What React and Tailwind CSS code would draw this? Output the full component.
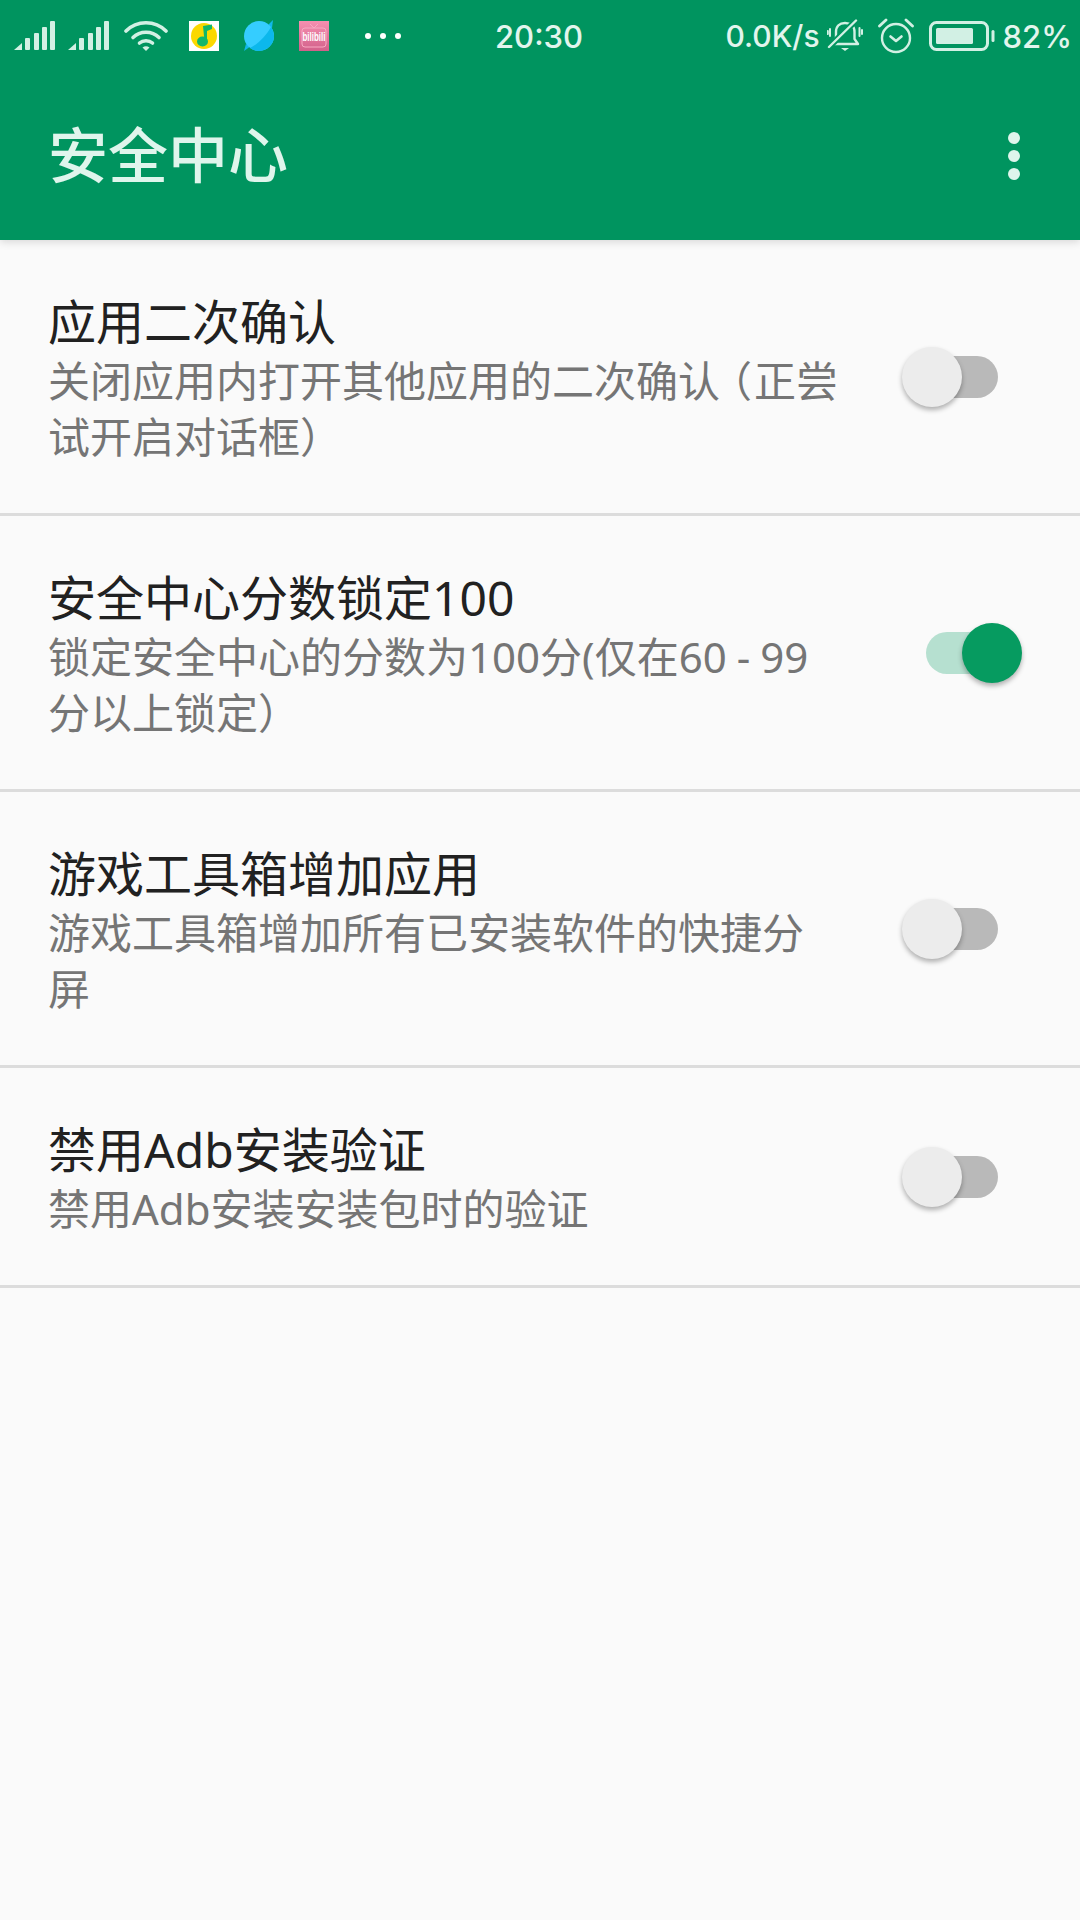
const ICON = '#d2f0e4';

function Signal({ className }) {
  return (
    <svg className={className} width="41" height="30" viewBox="0 0 41 30" fill={ICON}>
      <path d="M0 29 L8 22 V29 Z" />
      <rect x="11" y="17" width="5" height="12" rx="1" />
      <rect x="20" y="12" width="5" height="17" rx="1" />
      <rect x="28" y="6" width="5" height="23" rx="1" />
      <rect x="36" y="0" width="5" height="29" rx="1" />
    </svg>
  );
}

function Wifi() {
  return (
    <svg className="ml-[15px]" width="44" height="32" viewBox="0 0 44 32" fill="none" stroke={ICON} strokeWidth="3.6" strokeLinecap="round">
      <path d="M2 11 C13 0 31 0 42 11" />
      <path d="M9 17.5 C16 10.5 28 10.5 35 17.5" />
      <path d="M15.5 23 C19 20 25 20 28.5 23" />
      <path d="M22 31 L18.5 27.5 Q22 25 25.5 27.5 Z" fill={ICON} stroke="none" />
    </svg>
  );
}

function QQMusic() {
  return (
    <svg className="ml-[21px]" width="30" height="30" viewBox="0 0 30 30">
      <rect width="30" height="30" fill="#ffffff" />
      <circle cx="15" cy="15" r="13" fill="#fbd800" />
      <path d="M14 5 L15.5 20 L18 20 L18 10 L23 8 L23 3.5 Z" fill="#12b76a" />
      <ellipse cx="13.5" cy="20.5" rx="5.5" ry="5" fill="#12b76a" />
    </svg>
  );
}

function Planet() {
  return (
    <svg className="ml-[24px]" width="32" height="32" viewBox="0 0 32 32">
      <path d="M24 6 L30 0 L29 8 Z" fill="#10b8ea" />
      <path d="M8 26 L1 31 L3 24 Z" fill="#10b8ea" />
      <circle cx="16" cy="16" r="15" fill="#35cdff" />
      <path d="M28 7 A15 15 0 0 1 7 28 C15 24 23 16 28 7 Z" fill="#0cb8ec" />
    </svg>
  );
}

function Bili() {
  return (
    <svg className="ml-[24px]" width="30" height="30" viewBox="0 0 30 30">
      <defs>
        <linearGradient id="biliGradient" x1="0" y1="0" x2="0" y2="1">
          <stop offset="0" stopColor="#f590b0" />
          <stop offset="1" stopColor="#d2608a" />
        </linearGradient>
      </defs>
      <rect width="30" height="30" fill="url(#biliGradient)" />
      <path d="M11 3 L15 7 L19 3" fill="none" stroke="#f7a9c2" strokeWidth="1" />
      <rect x="3" y="7" width="24" height="19" rx="3" fill="none" stroke="#f7a9c2" strokeWidth="1" />
      <text x="3.5" y="20" fontSize="12" fontWeight="700" fill="#ffffff" textLength="23" lengthAdjust="spacingAndGlyphs" fontFamily="Liberation Sans, sans-serif">bilibili</text>
    </svg>
  );
}

function Dots() {
  return (
    <div className="ml-[36px] flex gap-[9px]">
      <div className="w-[6px] h-[6px] rounded-full bg-white" />
      <div className="w-[6px] h-[6px] rounded-full bg-white" />
      <div className="w-[6px] h-[6px] rounded-full bg-white" />
    </div>
  );
}

function Bell() {
  return (
    <svg className="ml-[7px]" width="36" height="34" viewBox="0 0 36 34" fill="none" stroke={ICON} strokeWidth="2.4" strokeLinecap="round" strokeLinejoin="round">
      <path d="M5 25 H31 L27.5 20 V13 C27.5 7 23.5 4 18 4 C12.5 4 9 7 9 13 V20 Z" />
      <path d="M2 28 L29 1.5" stroke="#00945f" strokeWidth="6" />
      <path d="M2 28 L29 1.5" />
      <path d="M14 29 H22 L18 32 Z" fill={ICON} stroke="none" />
      <path d="M3 10 V17 M0.8 12 V15 M32.5 9 V17 M35 11 V15" strokeWidth="2" />
    </svg>
  );
}

function Alarm() {
  return (
    <svg className="ml-[15px]" width="36" height="36" viewBox="0 0 36 36" fill="none" stroke={ICON} strokeWidth="2.4" strokeLinecap="round" strokeLinejoin="round">
      <circle cx="18" cy="20" r="14" />
      <path d="M12.5 18.5 L18 23 L23.5 18.5" strokeWidth="2.6" />
      <path d="M1.5 8 L8 2 M34.5 8 L28 2" strokeWidth="2.8" />
    </svg>
  );
}

function Battery() {
  return (
    <svg className="ml-[15px]" width="66" height="30" viewBox="0 0 66 30" fill="none">
      <rect x="1.5" y="1.5" width="57" height="27" rx="6" stroke={ICON} strokeWidth="3" />
      <rect x="7" y="7" width="37" height="16" rx="1.5" fill={ICON} />
      <rect x="62.5" y="9" width="3" height="12" rx="1.5" fill={ICON} />
    </svg>
  );
}

function StatusBar() {
  const statusFont = { fontFamily: 'Inter, "Liberation Sans", sans-serif' };
  return (
    <div className="h-[72px] flex items-center text-[#e2f5ed] font-medium text-[31px] leading-none" style={statusFont}>
      <div className="flex-1 flex items-center pl-[14px]">
        <Signal />
        <Signal className="ml-[13px]" />
        <Wifi />
        <QQMusic />
        <Planet />
        <Bili />
        <Dots />
      </div>
      <div className="w-[88px] mr-[8px] text-center whitespace-nowrap">20:30</div>
      <div className="flex-1 flex items-center justify-end pr-[8px]">
        <span className="text-[30px]">0.0K/s</span>
        <Bell />
        <Alarm />
        <Battery />
        <span className="ml-[8px]">82%</span>
      </div>
    </div>
  );
}

function Toolbar() {
  return (
    <div className="h-[168px] flex items-center justify-between pl-[48px] pr-[60px]">
      <div className="text-[60px] leading-none font-medium text-[#dff5ec] pb-[2px]">安全中心</div>
      <div className="flex flex-col gap-[6px]">
        <div className="w-[12px] h-[12px] rounded-full bg-[#dff5ec]" />
        <div className="w-[12px] h-[12px] rounded-full bg-[#dff5ec]" />
        <div className="w-[12px] h-[12px] rounded-full bg-[#dff5ec]" />
      </div>
    </div>
  );
}

function Switch({ on }) {
  return (
    <div className="relative w-[120px] h-[60px] shrink-0 mb-[3px]">
      <div className={on
        ? 'absolute left-[24px] top-[9px] w-[72px] h-[42px] rounded-full bg-[#b6e0d0]'
        : 'absolute left-[24px] top-[9px] w-[72px] h-[42px] rounded-full bg-[#b9b9b9]'} />
      <div className={on
        ? 'absolute left-[60px] top-0 w-[60px] h-[60px] rounded-full bg-[#069b60] shadow-[0_3px_5px_rgba(0,0,0,0.3)]'
        : 'absolute left-0 top-0 w-[60px] h-[60px] rounded-full bg-[#ececec] shadow-[0_3px_5px_rgba(0,0,0,0.3)]'} />
    </div>
  );
}

function Row({ title, summary, on }) {
  return (
    <div className="flex items-center border-b-[3px] border-[#dcdcdc] pl-[48px] pr-[58px] pt-[51px] pb-[48px]">
      <div className="w-[795px] shrink-0">
        <div className="text-[48px] leading-[62px] text-[#212121]">{title}</div>
        <div className="text-[42px] leading-[56px] text-[#757575]">{summary}</div>
      </div>
      <div className="flex-1 flex justify-end">
        <Switch on={on} />
      </div>
    </div>
  );
}

export default function App() {
  return (
    <div className="w-[1080px] h-[1920px] bg-[#fafafa] overflow-hidden" style={{ fontFamily: '"Noto Sans", "Noto Sans CJK SC", sans-serif' }}>
      <div className="bg-[#00945f] shadow-[0_2px_8px_rgba(0,0,0,0.14)] relative">
        <StatusBar />
        <Toolbar />
      </div>
      <Row
        title="应用二次确认"
        summary={<>关闭应用内打开其他应用的二次确认<span className="ml-[-10px] mr-[2px]">（</span>正尝试开启对话框）</>}
        on={false}
      />
      <Row
        title="安全中心分数锁定100"
        summary={<>锁定安全中心的分数为100分(仅在60<span className="mx-[10px]">-</span>99分以上锁定）</>}
        on={true}
      />
      <Row title="游戏工具箱增加应用" summary="游戏工具箱增加所有已安装软件的快捷分屏" on={false} />
      <Row title="禁用Adb安装验证" summary="禁用Adb安装安装包时的验证" on={false} />
    </div>
  );
}
